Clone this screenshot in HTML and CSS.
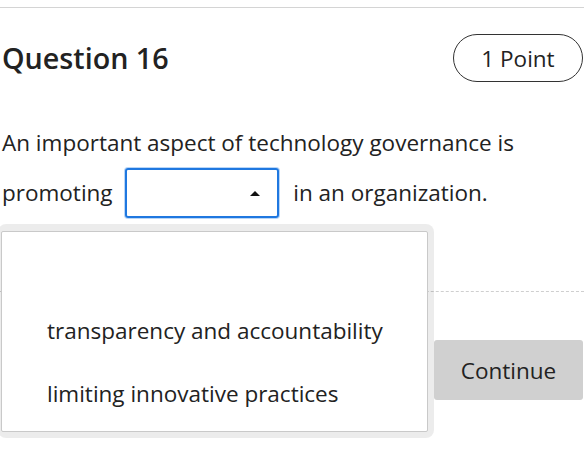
FILE: index.html
```html
<!DOCTYPE html>
<html>
<head>
<meta charset="utf-8">
<link rel="stylesheet" href="styles.css">
</head>
<body>
<div class="page">
  <div class="rule"></div>
  <div class="header">
    <h2 class="title">Question 16</h2>
    <span class="points">1 Point</span>
  </div>
  <div class="question">
    <p class="line">An important aspect of technology governance is</p>
    <p class="line">promoting <span class="select"><span class="caret"></span></span> in an organization.</p>
    <div class="menu">
      <ul class="options">
        <li class="option"></li>
        <li class="option">transparency and accountability</li>
        <li class="option">limiting innovative practices</li>
      </ul>
    </div>
  </div>
  <div class="footer">
    <button class="continue">Continue</button>
  </div>
</div>
</body>
</html>
```

FILE: styles.css
```css
html, body {
  margin: 0;
  padding: 0;
  background: #fff;
}
body {
  font-family: "Open Sans", "Noto Sans", sans-serif;
  color: #222;
  width: 584px;
  height: 466px;
  overflow: hidden;
}
.page {
  padding-top: 7px;
}
.rule {
  height: 1px;
  background: #d4d4d4;
}
.header {
  display: flex;
  justify-content: space-between;
  align-items: center;
  margin-top: 26px;
  padding-left: 2px;
  padding-right: 1px;
}
.title {
  margin: 0;
  font-size: 28.7px;
  font-weight: 600;
  line-height: 48px;
}
.points {
  box-sizing: border-box;
  width: 130px;
  height: 48px;
  border: 1.5px solid #333;
  border-radius: 24px;
  font-size: 22.5px;
  font-weight: 500;
  display: flex;
  align-items: center;
  justify-content: center;
}
.question {
  position: relative;
  margin-top: 36px;
  padding-left: 2px;
  font-size: 22.5px;
}
.line {
  margin: 0;
  line-height: 50px;
  height: 50px;
  display: flex;
  align-items: center;
  white-space: pre;
}
.select {
  box-sizing: border-box;
  display: inline-block;
  position: relative;
  width: 154px;
  height: 50px;
  border: 2px solid #1f78e0;
  border-radius: 3px;
  margin: 0 8px 0 7px;
  box-shadow: 0 0 0 1px #b9d6f7;
}
.caret {
  position: absolute;
  left: 123px;
  top: 21px;
  width: 0;
  height: 0;
  border-left: 5px solid transparent;
  border-right: 5px solid transparent;
  border-bottom: 5px solid #111;
}
.menu {
  position: absolute;
  left: -2px;
  top: 106px;
  width: 436px;
  height: 214px;
  box-sizing: border-box;
  background: rgba(0, 0, 0, 0.075);
  border-radius: 8px;
  padding: 7px 6px 6px 3px;
  z-index: 2;
}
.options {
  list-style: none;
  margin: 0;
  padding: 0 0 0 45px;
  height: 100%;
  box-sizing: border-box;
  background: #fff;
  border: 1px solid #c9c9c9;
  border-radius: 2px;
  font-size: 22.5px;
}
.option {
  height: 63px;
  line-height: 62px;
  white-space: nowrap;
}
.option:first-child {
  height: 68px;
}
.footer {
  margin-top: 73px;
  border-top: 1px dashed #cfcfcf;
  display: flex;
  justify-content: flex-end;
  padding-top: 48px;
  padding-right: 1px;
}
.continue {
  width: 149px;
  height: 60px;
  border: none;
  border-radius: 3px;
  background: #d0d0d0;
  font-family: inherit;
  font-size: 22.5px;
  color: #222;
  padding: 0;
}
```
